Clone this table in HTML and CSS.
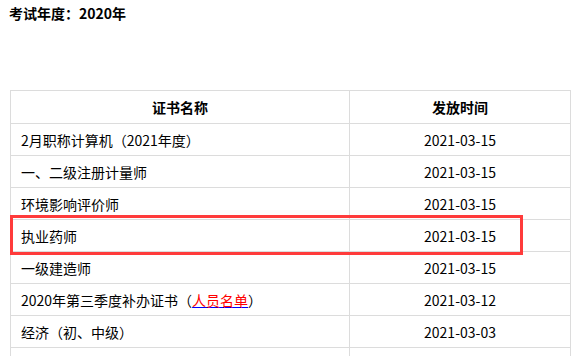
FILE: index.html
```html
<!DOCTYPE html>
<html lang="zh-CN">
<head>
<meta charset="utf-8">
<link rel="stylesheet" href="styles.css">
</head>
<body>
<p class="year">考试年度：2020年</p>
<div class="wrap">
  <table class="certs">
    <thead>
      <tr><th class="c-name">证书名称</th><th class="c-date">发放时间</th></tr>
    </thead>
    <tbody>
      <tr><td>2月职称计算机（2021年度）</td><td class="date">2021-03-15</td></tr>
      <tr><td>一、二级注册计量师</td><td class="date">2021-03-15</td></tr>
      <tr><td>环境影响评价师</td><td class="date">2021-03-15</td></tr>
      <tr><td>执业药师</td><td class="date">2021-03-15</td></tr>
      <tr><td>一级建造师</td><td class="date">2021-03-15</td></tr>
      <tr><td>2020年第三季度补办证书（<a class="list-link" href="#"><span class="red">人员名单</span></a>）</td><td class="date">2021-03-12</td></tr>
      <tr><td>经济（初、中级）</td><td class="date">2021-03-03</td></tr>
      <tr><td>&nbsp;</td><td class="date">&nbsp;</td></tr>
    </tbody>
  </table>
  <div class="highlight"></div>
</div>
</body>
</html>
```
FILE: styles.css
```css
html, body {
  margin: 0;
  padding: 0;
  background: #fff;
}
body {
  font-family: "Microsoft YaHei", "Noto Sans CJK SC", "Noto Sans", sans-serif;
  font-size: 14px;
  color: #000;
}
.year {
  margin: 0;
  padding: 3px 0 0 9px;
  line-height: 20px;
  font-weight: bold;
}
.wrap {
  position: relative;
  margin: 67px 0 0 10px;
  width: 561px;
  height: 266px;
  overflow: hidden;
}
.certs {
  border-collapse: collapse;
  width: 561px;
  table-layout: fixed;
}
.certs th, .certs td {
  border: 1px solid #dcdcdc;
  padding: 0 10px;
  height: 31px;
  line-height: 20px;
  vertical-align: middle;
  text-align: left;
  white-space: nowrap;
}
.certs th {
  height: 32px;
  text-align: center;
  font-weight: bold;
}
.c-name { width: 318px; }
.certs td.date { text-align: center; }
.list-link {
  color: #00f;
  text-decoration: underline;
  text-decoration-color: #00f;
}
.red { color: #f00; }
.highlight {
  position: absolute;
  left: 0;
  top: 125px;
  width: 513px;
  height: 40px;
  border: 3px solid #ff3b3b;
  box-sizing: border-box;
  pointer-events: none;
}
```
